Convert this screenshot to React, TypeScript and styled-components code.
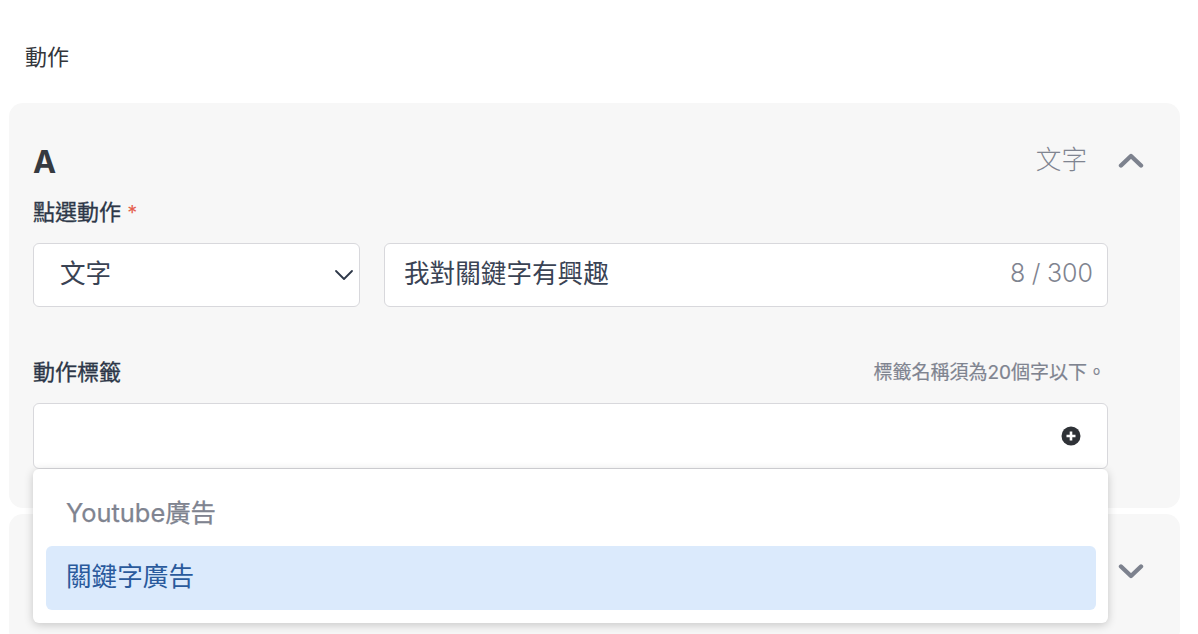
import styled, { createGlobalStyle } from 'styled-components';

const FONT = `Inter, 'Noto Sans CJK TC', sans-serif`;

const GlobalStyle = createGlobalStyle`
  html, body {
    margin: 0;
    padding: 0;
    background: #fff;
    overflow: hidden;
  }
  * {
    box-sizing: border-box;
  }
`;

export default function App() {
  return (
    <Page>
      <GlobalStyle />
      <SectionTitle>動作</SectionTitle>

      <Card>
        <CardHeader>
          <CardLetter>A</CardLetter>
          <HeaderRight>
            <TypeLabel>文字</TypeLabel>
            <Chevron width="26" height="16" viewBox="0 0 26 16">
              <path d="M3 12.5 L13 3 L23 12.5" />
            </Chevron>
          </HeaderRight>
        </CardHeader>

        <FieldLabel>
          點選動作 <Required>*</Required>
        </FieldLabel>
        <ActionRow>
          <SelectBox>
            文字
            <SelectCaret width="20" height="12" viewBox="0 0 20 12">
              <path d="M2 2 L10 10 L18 2" />
            </SelectCaret>
          </SelectBox>
          <TextBox>
            我對關鍵字有興趣
            <Counter>8 / 300</Counter>
          </TextBox>
        </ActionRow>

        <TagLabelRow>
          <TagLabel>動作標籤</TagLabel>
          <Hint>標籤名稱須為20個字以下。</Hint>
        </TagLabelRow>
        <TagField>
          <TagInput>
            <svg width="20" height="20" viewBox="0 0 20 20">
              <circle cx="10" cy="10" r="9.5" fill="#2f3237" />
              <path d="M10 5.5 V14.5 M5.5 10 H14.5" stroke="#fff" strokeWidth="2.6" />
            </svg>
          </TagInput>
          <Dropdown>
            <Option>Youtube廣告</Option>
            <Option $active>關鍵字廣告</Option>
          </Dropdown>
        </TagField>
      </Card>

      <CollapsedCard>
        <Chevron width="26" height="16" viewBox="0 0 26 16">
          <path d="M3 3.5 L13 13 L23 3.5" />
        </Chevron>
      </CollapsedCard>
    </Page>
  );
}

const Page = styled.div`
  width: 1198px;
  height: 634px;
  padding: 0 18px 0 9px;
  overflow: hidden;
  font-family: ${FONT};
`;

const SectionTitle = styled.h3`
  margin: 0;
  padding: 41px 0 0 16px;
  height: 103px;
  font-size: 22px;
  line-height: 32px;
  font-weight: 400;
  color: #33363b;
`;

const Card = styled.section`
  height: 405px;
  padding: 36px 0 0 24px;
  background: #f7f7f7;
  border-radius: 14px;
`;

const CollapsedCard = styled.section`
  display: flex;
  justify-content: flex-end;
  height: 130px;
  margin-top: 6px;
  padding: 49px 36px 0 0;
  background: #f7f7f7;
  border-radius: 14px;
`;

const CardHeader = styled.div`
  display: flex;
  align-items: center;
  justify-content: space-between;
  height: 44px;
  padding-right: 36px;
`;

const CardLetter = styled.span`
  font-size: 31px;
  font-weight: 700;
  color: #363a40;
`;

const HeaderRight = styled.div`
  display: flex;
  align-items: center;
  gap: 31px;
`;

const TypeLabel = styled.span`
  padding-bottom: 8px;
  font-size: 25.6px;
  font-weight: 300;
  color: #7f8490;
`;

const Chevron = styled.svg`
  display: block;
  fill: none;
  stroke: #7d828e;
  stroke-width: 4.4;
  stroke-linecap: round;
  stroke-linejoin: round;
`;

const SelectCaret = styled.svg`
  display: block;
  margin-top: 7px;
  fill: none;
  stroke: #2d3748;
  stroke-width: 1.8;
  stroke-linecap: round;
  stroke-linejoin: round;
`;

const FieldLabel = styled.div`
  height: 32px;
  margin-top: 13px;
  font-size: 22px;
  line-height: 32px;
  font-weight: 400;
  color: #2d3748;
  -webkit-text-stroke: 0.3px #2d3748;
`;

const Required = styled.span`
  font-size: 20px;
  color: #e5604d;
  -webkit-text-stroke: 0;
`;

const ActionRow = styled.div`
  display: flex;
  gap: 24px;
  width: 1075px;
  margin-top: 15px;
`;

const SelectBox = styled.div`
  display: flex;
  align-items: center;
  justify-content: space-between;
  flex: 0 0 327px;
  height: 64px;
  padding: 0 5px 7px 26px;
  background: #fff;
  border: 1px solid #d8d8dc;
  border-radius: 6px;
  font-size: 25.6px;
  font-weight: 400;
  color: #3a4354;
`;

const TextBox = styled.div`
  display: flex;
  align-items: center;
  justify-content: space-between;
  flex: 1;
  height: 64px;
  padding: 0 14px 7px 19px;
  background: #fff;
  border: 1px solid #d8d8dc;
  border-radius: 6px;
  font-size: 25.6px;
  font-weight: 400;
  color: #3a4354;
`;

const Counter = styled.span`
  padding-top: 3px;
  font-size: 25px;
  font-weight: 300;
  word-spacing: -0.5px;
  color: #7f8490;
`;

const TagLabelRow = styled.div`
  display: flex;
  align-items: center;
  justify-content: space-between;
  width: 1075px;
  height: 32px;
  margin-top: 47px;
  padding-right: 2px;
`;

const TagLabel = styled.span`
  font-size: 22px;
  font-weight: 400;
  color: #2d3748;
  -webkit-text-stroke: 0.3px #2d3748;
`;

const Hint = styled.span`
  font-size: 19px;
  font-weight: 400;
  color: #7f8490;
  -webkit-text-stroke: 0.2px #7f8490;
`;

const TagField = styled.div`
  position: relative;
  width: 1075px;
  margin-top: 17px;
`;

const TagInput = styled.div`
  display: flex;
  align-items: center;
  justify-content: flex-end;
  height: 66px;
  padding-right: 26px;
  background: #fff;
  border: 1px solid #d8d8dc;
  border-radius: 6px;
`;

const Dropdown = styled.div`
  position: absolute;
  top: 66px;
  left: 0;
  right: 0;
  height: 154px;
  padding: 12px 12px 0 13px;
  background: #fff;
  border-radius: 6px;
  box-shadow: 0 2px 10px rgba(0, 0, 0, 0.2);
`;

const Option = styled.div<{ $active?: boolean }>`
  display: flex;
  align-items: center;
  height: 64px;
  padding-left: 20px;
  padding-bottom: ${(p) => (p.$active ? 7 : 5)}px;
  border-radius: 6px;
  font-size: ${(p) => (p.$active ? 25.6 : 25.4)}px;
  font-weight: 400;
  color: ${(p) => (p.$active ? '#2a5a9c' : '#7f8490')};
  background: ${(p) => (p.$active ? '#dbeafc' : 'transparent')};
  -webkit-text-stroke: ${(p) => (p.$active ? '0' : '0.25px #7f8490')};
  & + & {
    margin-top: 1px;
  }
`;
